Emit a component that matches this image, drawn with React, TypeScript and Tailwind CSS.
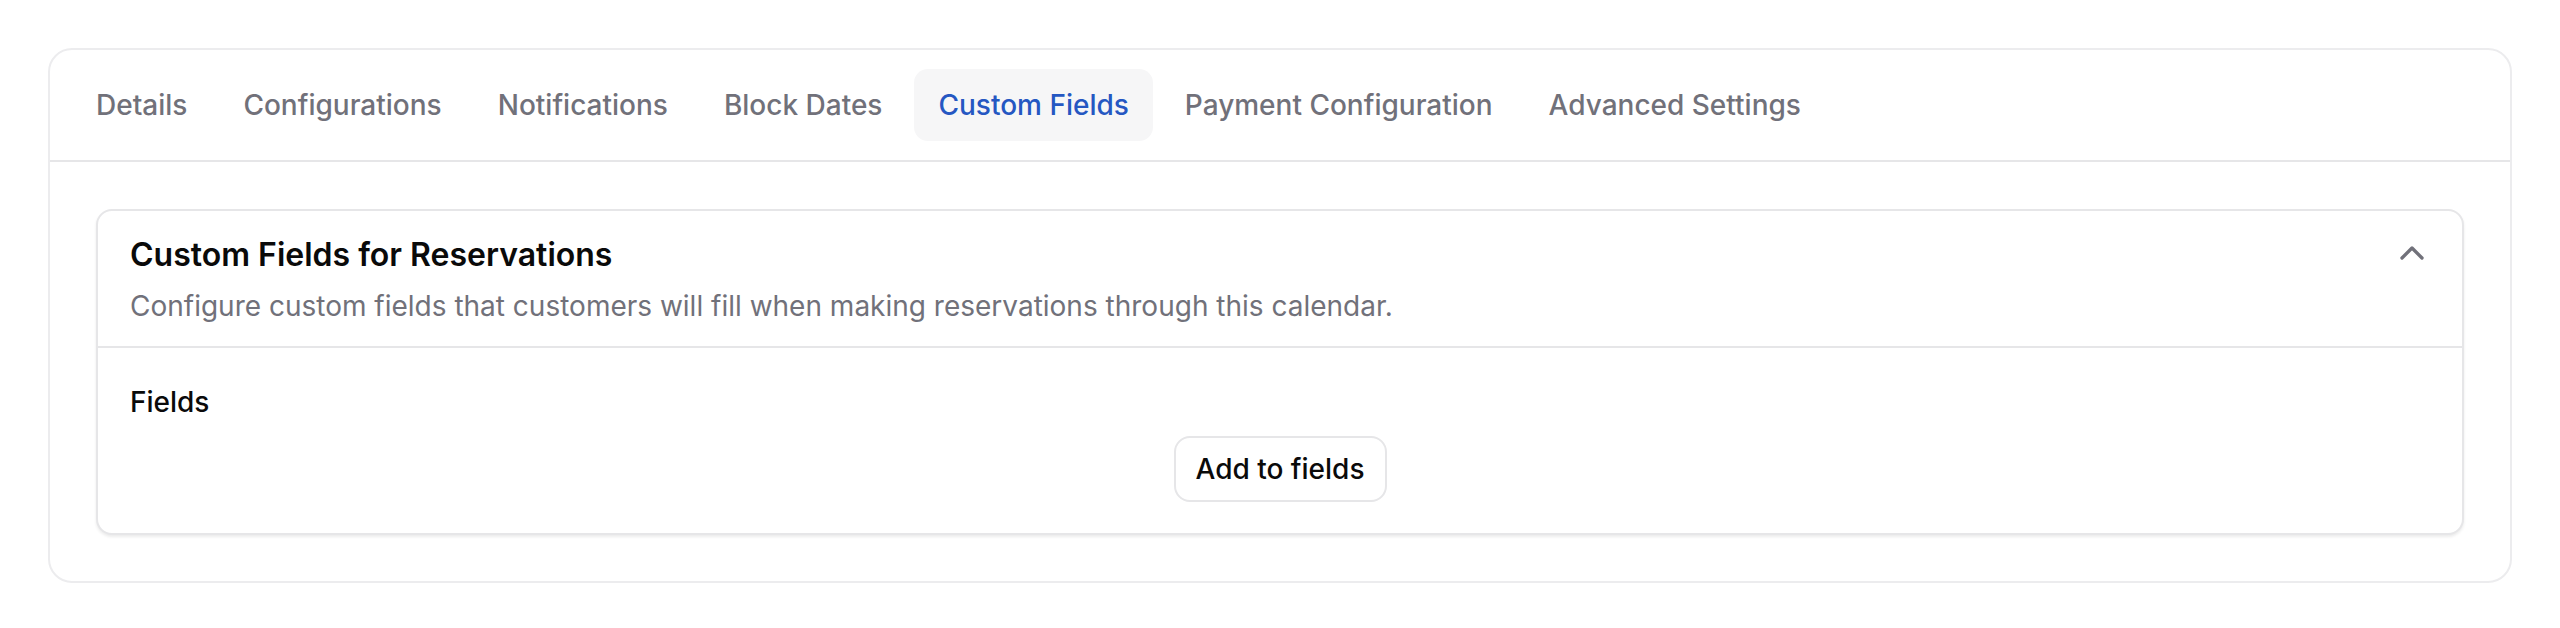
import React from 'react';
import { ChevronUp } from 'lucide-react';

const tabs = [
  'Details',
  'Configurations',
  'Notifications',
  'Block Dates',
  'Custom Fields',
  'Payment Configuration',
  'Advanced Settings',
];

const App: React.FC = () => {
  const active = 'Custom Fields';

  return (
    <div className="min-h-screen bg-white p-12 font-['Inter',sans-serif] antialiased">
      <div className="rounded-[24px] border-2 border-[#ececee] bg-white">
        {/* tab strip */}
        <div className="flex items-center gap-[8px] border-b-2 border-[#e6e6e8] px-[22px] pt-[19px] pb-[19px]">
          {tabs.map((t) => (
            <button
              key={t}
              className={
                t === active
                  ? 'h-[72px] rounded-[14px] bg-[#f6f6f7] px-6 text-[28px] font-medium text-[#2557c2]'
                  : 'h-[72px] rounded-[14px] px-6 text-[28px] font-medium text-[#71717a]'
              }
            >
              {t}
            </button>
          ))}
        </div>

        {/* tab content */}
        <div className="px-[46px] pt-[47px] pb-[46px]">
          <div className="rounded-[16px] border-2 border-[#e6e6e8] bg-white shadow-[0_2px_3px_rgba(0,0,0,0.08)]">
            <div className="flex items-start justify-between border-b-2 border-[#e6e6e8] px-8 pt-[28px] pb-[20px]">
              <div>
                <h3 className="text-[32px] font-semibold leading-none text-[#0a0a0a]">
                  Custom Fields for Reservations
                </h3>
                <p className="mt-[15px] text-[28px] leading-[40px] text-[#71717a]">
                  Configure custom fields that customers will fill when making reservations through this calendar.
                </p>
              </div>
              <ChevronUp className="-mr-[2px] -mt-[6px] h-10 w-10 text-[#71717a]" strokeWidth={2} />
            </div>

            <div className="px-8 pt-[34px] pb-[31px]">
              <div className="text-[28px] leading-[40px] font-medium text-[#0a0a0a]">Fields</div>
              <div className="mt-[14px] flex justify-center">
                <button className="h-[66px] rounded-[16px] border-2 border-[#e6e6e8] bg-white px-[20px] text-[28px] font-medium text-[#0a0a0a]">
                  Add to fields
                </button>
              </div>
            </div>
          </div>
        </div>
      </div>
    </div>
  );
};

export default App;
